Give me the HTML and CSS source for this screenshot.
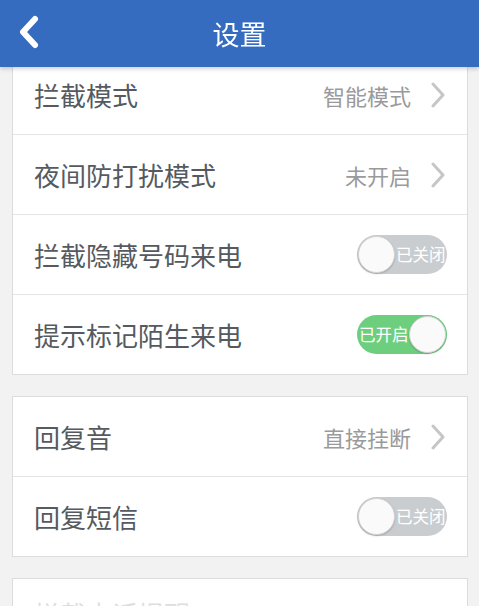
FILE: index.html
```html
<!DOCTYPE html>
<html lang="zh-CN">
<head>
<meta charset="utf-8">
<title>设置</title>
<link rel="stylesheet" href="styles.css">
</head>
<body>
<header class="topbar">
  <svg class="back" width="30" height="40" viewBox="0 0 30 40"><polyline points="17,5 5,18 17,31" fill="none" stroke="#fff" stroke-width="6" stroke-linecap="round" stroke-linejoin="round"/></svg>
  <h1 class="title">设置</h1>
</header>
<main class="content">
  <section class="card">
    <div class="row">
      <span class="label">拦截模式</span>
      <span class="right"><span class="value">智能模式</span><svg class="chev" width="16" height="26" viewBox="0 0 16 26"><polyline points="3,2 13,13 3,24" fill="none" stroke="#c6c6c6" stroke-width="3" stroke-linecap="round" stroke-linejoin="round"/></svg></span>
    </div>
    <div class="row">
      <span class="label">夜间防打扰模式</span>
      <span class="right"><span class="value">未开启</span><svg class="chev" width="16" height="26" viewBox="0 0 16 26"><polyline points="3,2 13,13 3,24" fill="none" stroke="#c6c6c6" stroke-width="3" stroke-linecap="round" stroke-linejoin="round"/></svg></span>
    </div>
    <div class="row">
      <span class="label">拦截隐藏号码来电</span>
      <span class="switch off"><span class="knob"></span><span class="stext">已关闭</span></span>
    </div>
    <div class="row">
      <span class="label">提示标记陌生来电</span>
      <span class="switch on"><span class="stext">已开启</span><span class="knob"></span></span>
    </div>
  </section>
  <section class="card">
    <div class="row">
      <span class="label">回复音</span>
      <span class="right"><span class="value">直接挂断</span><svg class="chev" width="16" height="26" viewBox="0 0 16 26"><polyline points="3,2 13,13 3,24" fill="none" stroke="#c6c6c6" stroke-width="3" stroke-linecap="round" stroke-linejoin="round"/></svg></span>
    </div>
    <div class="row">
      <span class="label">回复短信</span>
      <span class="switch off"><span class="knob"></span><span class="stext">已关闭</span></span>
    </div>
  </section>
  <section class="card">
    <div class="row last">
      <span class="label">拦截电话提醒</span>
    </div>
  </section>
</main>
</body>
</html>
```
FILE: styles.css
```css
* { box-sizing: border-box; }
html, body { margin: 0; padding: 0; }
body {
  background: #f2f2f2;
  font-family: "Noto Sans CJK SC", "Noto Sans", sans-serif;
  width: 479px;
  height: 606px;
  overflow: hidden;
}
.topbar {
  position: fixed;
  top: 0;
  left: 0;
  right: 0;
  height: 67px;
  background: #356cbf;
  display: flex;
  align-items: center;
  justify-content: center;
  box-shadow: 0 2px 4px rgba(0,0,0,0.18);
  z-index: 2;
}
.back {
  position: absolute;
  left: 18px;
  top: 14px;
}
.title {
  margin: 0;
  color: #fff;
  font-size: 27px;
  font-weight: 400;
  line-height: 1;
}
.content {
  padding-top: 54px;
  display: flex;
  flex-direction: column;
  gap: 21px;
}
.card {
  margin: 0 11px 0 12px;
  background: #fff;
  border: 1px solid #dcdcdc;
}
.row {
  height: 80px;
  display: flex;
  align-items: center;
  justify-content: space-between;
  padding: 0 20px 0 21px;
  border-top: 1px solid #e4e4e4;
}
.row:first-child { border-top: none; height: 79px; }
.row.last { align-items: flex-start; padding-top: 22px; }
.label {
  font-size: 26px;
  color: #555a60;
  line-height: 1;
}
.row.last .label { color: #dedede; }
.right {
  display: flex;
  align-items: center;
  gap: 19px;
}
.value {
  font-size: 22px;
  color: #9a9a9a;
  line-height: 1;
}
.chev { margin-right: 1px; }
.switch {
  width: 90px;
  height: 39px;
  border-radius: 20px;
  display: flex;
  align-items: center;
  padding: 0 1px;
}
.switch.off { background: #c9cdd0; }
.switch.on { background: #6dcf7e; justify-content: space-between; }
.knob {
  width: 37px;
  height: 37px;
  border-radius: 50%;
  background: #fafafa;
  border: 1px solid #d3d3d3;
  box-shadow: 0 1px 2px rgba(0,0,0,0.2);
  flex: none;
}
.stext {
  color: #fff;
  font-size: 16.5px;
  line-height: 1;
}
.switch.off .stext { margin-left: 1px; }
.switch.on .stext { margin-left: 1px; }
```
